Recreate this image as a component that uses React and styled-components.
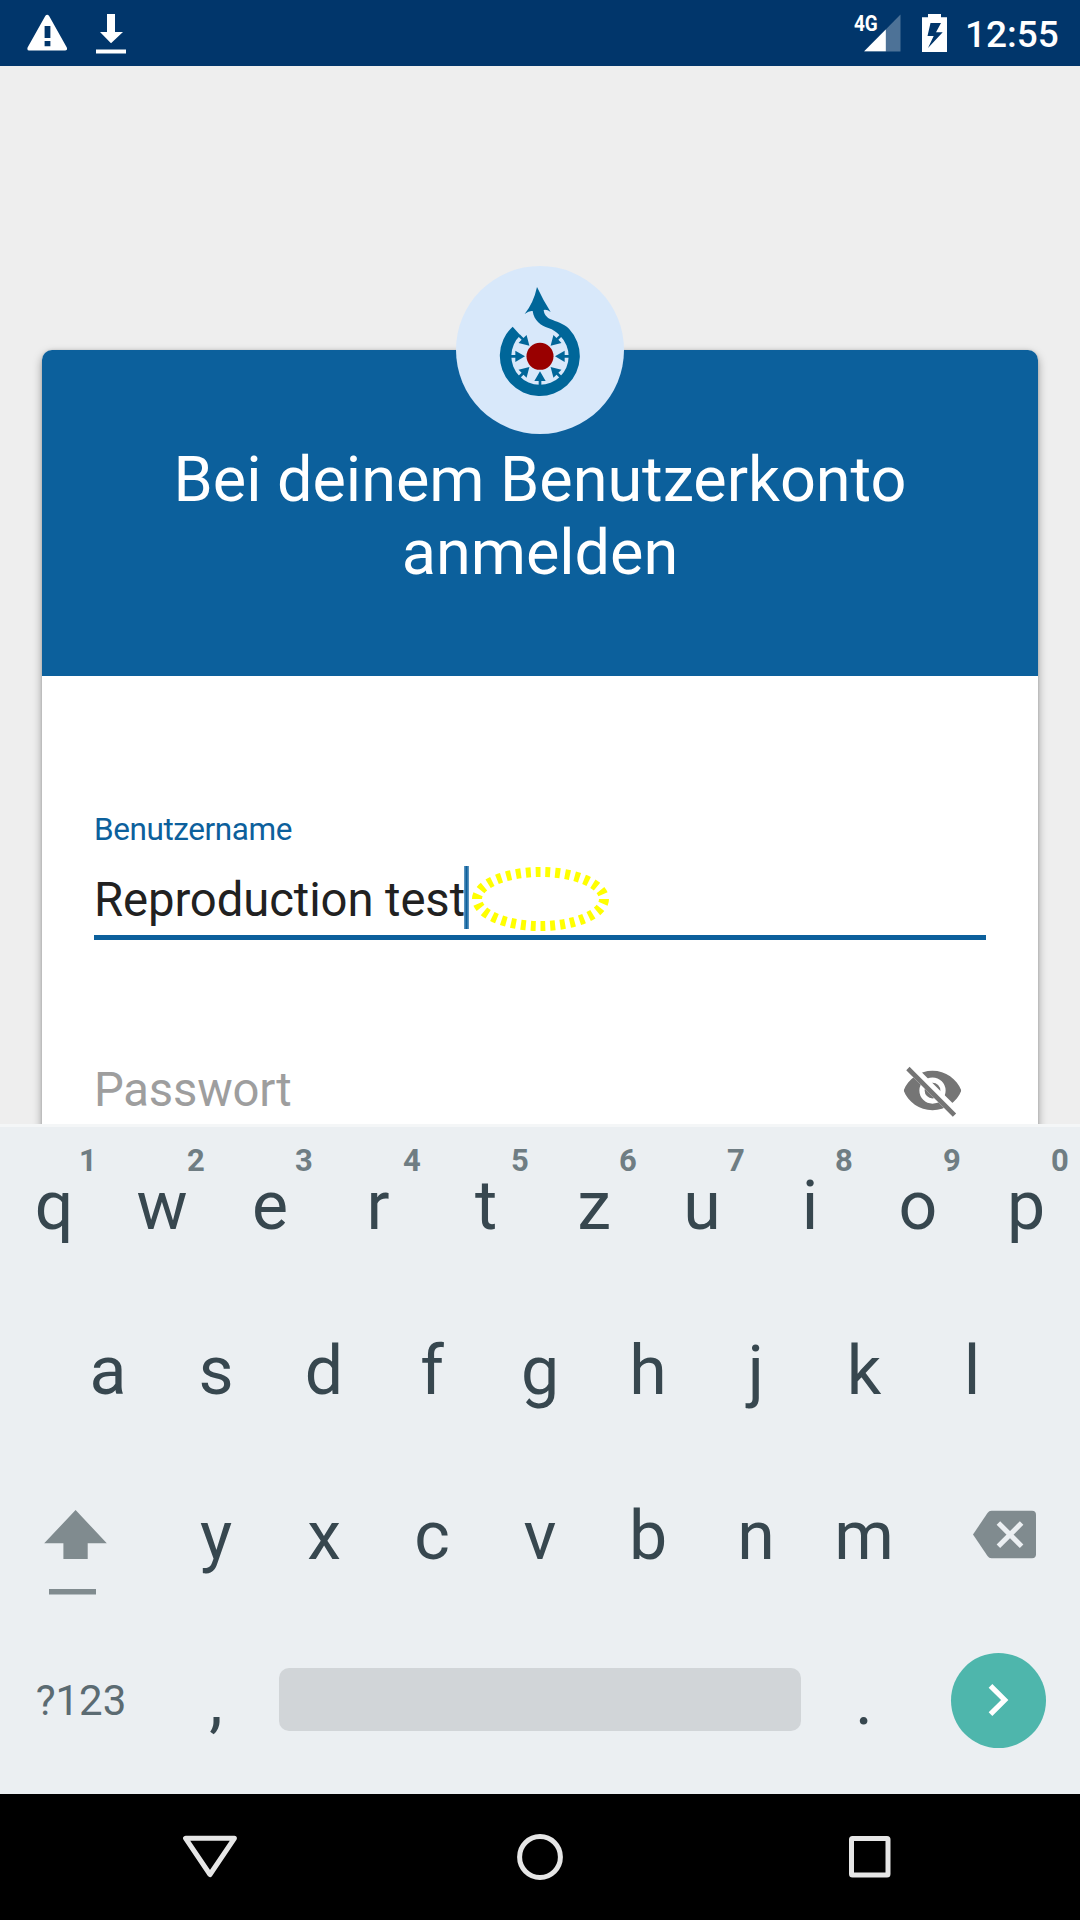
import React from "react";
import styled, { createGlobalStyle } from "styled-components";

const GlobalStyle = createGlobalStyle`
  * { box-sizing: border-box; }
  body { margin: 0; font-family: Roboto, "Noto Sans", sans-serif; }
  svg { display: block; flex: none; }
`;

const Screen = styled.div`
  display: flex;
  flex-direction: column;
  width: 1080px;
  height: 1920px;
  overflow: hidden;
  background: #eeeeee;
`;

const StatusBar = styled.header`
  display: flex;
  justify-content: space-between;
  flex: none;
  height: 66px;
  padding: 0 22px 0 27px;
  background: #01366b;
  color: #ffffff;
`;

const StatusGroup = styled.div`
  display: flex;
  align-items: flex-start;
`;

const StatusIcon = styled.svg`
  margin-left: ${(p) => p.$gap || 0}px;
`;

const NetworkType = styled.span`
  width: 10px;
  margin-top: 10px;
  font-size: 22px;
  font-weight: 700;
  line-height: 27px;
  white-space: nowrap;
  transform: scaleX(0.86);
  transform-origin: left;
`;

const Clock = styled.time`
  width: 93px;
  margin-left: 18px;
  font-size: 37px;
  font-weight: 500;
  line-height: 70px;
  text-align: right;
`;

const Content = styled.main`
  flex: 1;
  min-height: 0;
  padding: 284px 42px 0;
  overflow: hidden;
`;

const Card = styled.section`
  position: relative;
  height: 1000px;
  border-radius: 10px;
  background: #ffffff;
  box-shadow: 0 4px 10px rgba(0, 0, 0, 0.36), 0 0 3px rgba(0, 0, 0, 0.12);
`;

const Badge = styled.div`
  position: absolute;
  top: -84px;
  left: 414px;
  width: 168px;
  height: 168px;
  border-radius: 50%;
  background: #d8e8fa;
`;

const CardHeader = styled.div`
  height: 326px;
  padding: 93px 100px 0;
  border-radius: 10px 10px 0 0;
  background: #0c609c;
`;

const Title = styled.h1`
  margin: 0;
  color: #ffffff;
  font-size: 63px;
  font-weight: 400;
  letter-spacing: -0.04px;
  line-height: 73px;
  text-align: center;
`;

const Form = styled.div`
  padding: 135px 52px 0;
`;

const Label = styled.label`
  display: block;
  color: #0c609c;
  font-size: 31.5px;
  letter-spacing: -0.42px;
  line-height: 37px;
`;

const UserField = styled.div`
  display: flex;
  align-items: flex-start;
  height: 92px;
  padding-top: 18px;
  border-bottom: 5px solid #0c609c;
`;

const Value = styled.span`
  width: 370px;
  margin-top: 6px;
  color: #212121;
  font-size: 47.25px;
  letter-spacing: -0.1px;
  line-height: 56px;
  white-space: nowrap;
`;

const Caret = styled.span`
  width: 5px;
  height: 63px;
  background: linear-gradient(90deg, #6b9fc6, #0c609c 50%, #6b9fc6);
`;

const PasswordField = styled.div`
  display: flex;
  justify-content: space-between;
  align-items: flex-start;
  margin-top: 119px;
  padding-right: 22px;
`;

const Placeholder = styled.span`
  margin-top: 3px;
  color: #9e9e9e;
  font-size: 47.25px;
  letter-spacing: -0.2px;
  line-height: 56px;
`;

const Keyboard = styled.section`
  flex: none;
  height: 670px;
  border-top: 3px solid #f4f6f7;
  background: #ebeff2;
  color: #37474f;
`;

const KeyRow = styled.div`
  display: flex;
  height: 165px;
  margin-top: ${(p) => p.$shift || 0}px;
  padding: 0 ${(p) => p.$inset || 0}px;
`;

const Key = styled.div`
  position: relative;
  display: flex;
  justify-content: center;
  align-items: center;
  width: ${(p) => p.$width || 108}px;
  height: 165px;
  padding-bottom: ${(p) => p.$lift ?? 2}px;
  font-size: 68px;
  line-height: 80px;
`;

const KeyHint = styled.span`
  position: absolute;
  top: 19px;
  left: 68px;
  width: 40px;
  color: #6f7d83;
  font-size: 31px;
  font-weight: 700;
  line-height: 36px;
  text-align: center;
`;

const SymbolLabel = styled.span`
  color: #5b6b72;
  font-size: 42px;
  line-height: 50px;
`;

const SpaceKey = styled.div`
  width: 522px;
  height: 63px;
  margin: 49px 9px 0;
  border-radius: 10px;
  background: #d1d5d8;
`;

const EnterButton = styled.div`
  display: flex;
  justify-content: center;
  align-items: center;
  width: 95px;
  height: 95px;
  margin-right: 1px;
  border-radius: 50%;
  background: #4eb6ac;
`;

const NavBar = styled.nav`
  display: flex;
  justify-content: center;
  gap: 274px;
  flex: none;
  height: 126px;
  padding-top: 39px;
  background: #000000;
`;

const TOP_ROW = ["q", "w", "e", "r", "t", "z", "u", "i", "o", "p"];
const HOME_ROW = ["a", "s", "d", "f", "g", "h", "j", "k", "l"];
const BOTTOM_ROW = ["y", "x", "c", "v", "b", "n", "m"];

const CommonsLogo = () => (
  <svg width="168" height="168" viewBox="48 48 504 504">
    <path
      fill="#006699"
      d="M218 230A120 120 0 1 0 387 236C370 220 348 215 332 208C318 201 312 191 311 180Q321 178 332 186Q309 150 291 111Q281 158 254 192Q268 181 278 183C282 212 303 227 325 234Q346 241 361 258A86 86 0 1 1 241 256Z"
    />
    {[0, 45, 90, 135, 180, 225, 315].map((angle) => (
      <path
        key={angle}
        fill="#006699"
        transform={`translate(300 319) rotate(${angle})`}
        d="M45 0L74 -17V-4H89V4H74V17Z"
      />
    ))}
    <circle cx="300" cy="319" r="40.5" fill="#990000" />
  </svg>
);

const HiddenEye = () => (
  <svg width="63" height="63" viewBox="0 0 24 24">
    <clipPath id="eye-cut">
      <path d="M2 4.27L19.73 22 22.27 19.46 4.54 1.73V1H23V23H1V4.27Z" />
    </clipPath>
    <path
      clipPath="url(#eye-cut)"
      fill="#757575"
      fillRule="evenodd"
      d="M12 4.5C7 4.5 2.73 7.61 1 12c1.73 4.39 6 7.5 11 7.5s9.27-3.11 11-7.5c-1.73-4.39-6-7.5-11-7.5zM12 17a5 5 0 1 1 0-10 5 5 0 0 1 0 10zM12 9a3 3 0 1 0 0 6 3 3 0 0 0 0-6z"
    />
    <path d="M3.27 4.27L19.74 20.74" stroke="#757575" strokeWidth="1.8" strokeLinecap="square" />
  </svg>
);

export default function App() {
  return (
    <>
      <GlobalStyle />
      <Screen>
        <StatusBar>
          <StatusGroup>
            <StatusIcon width="41" height="66" viewBox="27 0 41 66">
              <path
                fill="#fff"
                fillRule="evenodd"
                d="M45.4 15.8Q47.2 13.8 49 15.8L66.8 47.6Q67.8 50.4 65.3 50.4H29.2Q26.7 50.4 27.6 47.6ZM44.6 26V38H50.4V26ZM44.6 41V46.2H50.4V41Z"
              />
            </StatusIcon>
            <StatusIcon $gap={28} width="30" height="66" viewBox="96 0 30 66">
              <path fill="#fff" d="M107 14H115V32H123L111 43.3 100 32H107ZM96 49.4H126V53.6H96Z" />
            </StatusIcon>
          </StatusGroup>
          <StatusGroup>
            <NetworkType>4G</NetworkType>
            <StatusIcon width="37" height="66" viewBox="864 0 37 66">
              <path fill="#4d7297" d="M900.5 14.5V51.5H864Z" />
              <path fill="#fff" d="M885.8 29.6V51.2H864.2Z" />
            </StatusIcon>
            <StatusIcon $gap={21} width="25" height="66" viewBox="922 0 25 66">
              <path
                fill="#fff"
                fillRule="evenodd"
                d="M928 14H941V17.3H947V52H922V17.3H928ZM930.5 23L927.5 36H933.7L928 48 942.7 32.3H936L941 23Z"
              />
            </StatusIcon>
            <Clock>12:55</Clock>
          </StatusGroup>
        </StatusBar>

        <Content>
          <Card>
            <CardHeader>
              <Title>Bei deinem Benutzerkonto anmelden</Title>
            </CardHeader>
            <Badge>
              <CommonsLogo />
            </Badge>
            <Form>
              <Label>Benutzername</Label>
              <UserField>
                <Value>Reproduction test</Value>
                <Caret />
                <svg width="140" height="66" viewBox="0 0 140 66">
                  <ellipse
                    cx="71.5"
                    cy="33"
                    rx="63.5"
                    ry="27"
                    fill="none"
                    stroke="#ffff00"
                    strokeWidth="10"
                    pathLength="300"
                    strokeDasharray="5 5"
                  />
                </svg>
              </UserField>
              <PasswordField>
                <Placeholder>Passwort</Placeholder>
                <HiddenEye />
              </PasswordField>
            </Form>
          </Card>
        </Content>

        <Keyboard>
          <KeyRow $shift={-3}>
            {TOP_ROW.map((letter, i) => (
              <Key key={letter}>
                {letter}
                <KeyHint>{(i + 1) % 10}</KeyHint>
              </Key>
            ))}
          </KeyRow>
          <KeyRow $inset={54}>
            {HOME_ROW.map((letter) => (
              <Key key={letter}>{letter}</Key>
            ))}
          </KeyRow>
          <KeyRow>
            <Key $width={162} $lift={0}>
              <svg width="162" height="165" viewBox="0 1454 162 165">
                <path fill="#808b8f" d="M75.6 1510L106.8 1543.3H87.7V1559H63.4V1543.3H44.2Z" />
                <path fill="#808b8f" d="M49 1589H96V1594.5H49Z" />
              </svg>
            </Key>
            {BOTTOM_ROW.map((letter) => (
              <Key key={letter}>{letter}</Key>
            ))}
            <Key $width={162} $lift={0}>
              <svg width="162" height="165" viewBox="918 1454 162 165">
                <path
                  fill="#808b8f"
                  d="M973 1534.5L987.5 1513Q989 1510.8 991.5 1510.8H1032Q1036 1510.8 1036 1514.8V1554.2Q1036 1558.2 1032 1558.2H991.5Q989 1558.2 987.5 1556Z"
                />
                <path stroke="#ebeff2" strokeWidth="5" d="M998.4 1523L1021.6 1546.2M1021.6 1523L998.4 1546.2" />
              </svg>
            </Key>
          </KeyRow>
          <KeyRow>
            <Key $width={162}>
              <SymbolLabel>?123</SymbolLabel>
            </Key>
            <Key $lift={1}>,</Key>
            <SpaceKey />
            <Key $lift={1}>.</Key>
            <Key $width={162} $lift={3}>
              <EnterButton>
                <svg width="22" height="34" viewBox="0 0 22 34">
                  <path d="M2.5 2.8L16.7 17 2.5 31.2" fill="none" stroke="#fff" strokeWidth="5.2" />
                </svg>
              </EnterButton>
            </Key>
          </KeyRow>
        </Keyboard>

        <NavBar>
          <svg width="56" height="48" viewBox="0 0 56 48">
            <path
              d="M3.6 5.3H52.4L28 41.5Z"
              fill="none"
              stroke="#e6e6e6"
              strokeWidth="5"
              strokeLinejoin="round"
            />
          </svg>
          <svg width="56" height="48" viewBox="-4 0 56 48">
            <circle cx="24" cy="24" r="20.4" fill="none" stroke="#e6e6e6" strokeWidth="5" />
          </svg>
          <svg width="56" height="48" viewBox="-4 0 56 48">
            <rect x="5.5" y="5.5" width="36.5" height="36.5" rx="1" fill="none" stroke="#e6e6e6" strokeWidth="5" />
          </svg>
        </NavBar>
      </Screen>
    </>
  );
}
